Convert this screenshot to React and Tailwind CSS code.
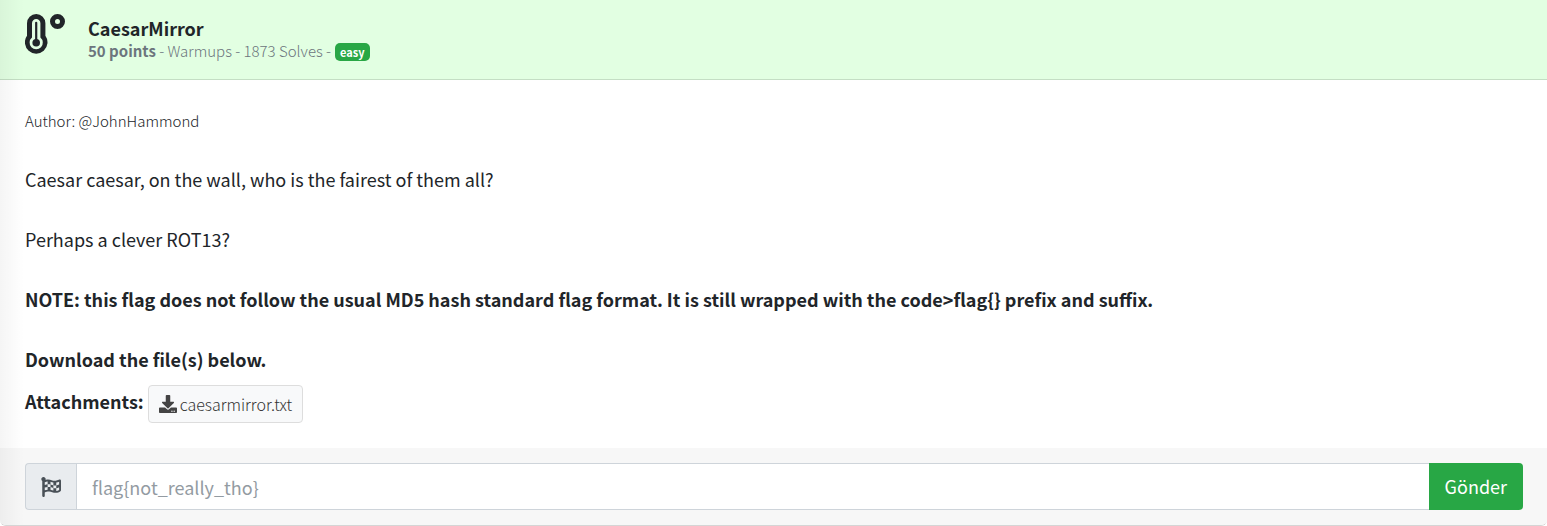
import { FaDownload, FaFlagCheckered } from "react-icons/fa";

function TemperatureIcon() {
  return (
    <svg viewBox="0 0 40 40" className="size-10 shrink-0" fill="none" aria-hidden="true">
      <path
        d="M11.2 0a9.2 9.2 0 0 0-9.2 9.2v12.6a11.3 11.3 0 1 0 18.4 0V9.2A9.2 9.2 0 0 0 11.2 0z"
        fill="#212529"
      />
      <path d="M11.2 5a4.2 4.2 0 0 0-4.2 4.2v14.4a6.6 6.6 0 1 0 8.4 0V9.2A4.2 4.2 0 0 0 11.2 5z" fill="#e2ffe2" />
      <path d="M11.2 8.8v18" stroke="#212529" strokeWidth="2.2" strokeLinecap="round" />
      <circle cx="11.2" cy="28.8" r="3.8" fill="#212529" />
      <circle cx="32.5" cy="7.5" r="5" stroke="#212529" strokeWidth="5" />
    </svg>
  );
}

function Header() {
  return (
    <header className="flex items-start gap-[23px] border-b border-[#c4dec4] bg-[#e2ffe2] pt-3.5 pr-6 pb-[15px] pl-[25px]">
      <TemperatureIcon />
      <div className="pt-1">
        <h1 className="text-[18px] leading-5 font-bold">CaesarMirror</h1>
        <p className="flex items-center gap-1 text-[15px] leading-[26px] font-light text-[#6c757d]">
          <span>
            <b className="font-bold">50 points</b> - Warmups - 1873 Solves -
          </span>
          <span className="mt-0.5 rounded-[5px] bg-[#28a745] px-[5px] text-[11px] leading-[18px] font-bold text-white">
            easy
          </span>
        </p>
      </div>
    </header>
  );
}

function Description() {
  return (
    <main className="pt-[26px] pr-6 pb-[25px] pl-[25px] text-[18px] leading-[30px]">
      <p className="mb-7 text-[15px] font-light">Author: @JohnHammond</p>
      <p className="mb-[30px]">Caesar caesar, on the wall, who is the fairest of them all?</p>
      <p className="mb-[30px]">Perhaps a clever ROT13?</p>
      <p className="mb-[30px] font-bold">
        NOTE: this flag does not follow the usual MD5 hash standard flag format. It is still wrapped with the
        code&gt;flag{"{}"} prefix and suffix.
      </p>
      <p className="mb-[11px] font-bold">Download the file(s) below.</p>
      <div className="flex items-start gap-1">
        <b className="leading-8 font-bold">Attachments:</b>
        <a
          href="#caesarmirror.txt"
          className="flex h-[38px] items-center gap-[3px] rounded border border-[#ddd] bg-[#f8f9fa] px-2.5 text-[16px] font-light text-[#333]"
        >
          <FaDownload className="size-[18px] text-[#444]" aria-hidden="true" />
          caesarmirror.txt
        </a>
      </div>
    </main>
  );
}

function FlagForm() {
  return (
    <form
      className="flex bg-[#f7f7f7] py-[15px] pr-6 pl-[25px] text-[18px]"
      onSubmit={(event) => event.preventDefault()}
    >
      <label
        htmlFor="flag"
        aria-label="Flag"
        className="flex w-[51px] items-center justify-center rounded-l border border-r-0 border-[#ced4da] bg-[#e9ecef] text-[#495057]"
      >
        <FaFlagCheckered className="size-5" aria-hidden="true" />
      </label>
      <input
        id="flag"
        type="text"
        aria-label="Flag"
        placeholder="flag{not_really_tho}"
        className="h-[47px] min-w-0 flex-1 border border-r-0 border-[#ced4da] bg-white px-[15px] outline-none placeholder:text-[#939ba2]"
      />
      <button type="submit" className="rounded-r bg-[#28a745] px-4 text-white">
        Gönder
      </button>
    </form>
  );
}

export default function App() {
  return (
    <div className="relative overflow-hidden rounded-b-md border-b border-[#d5d5d5] bg-white font-['Noto_Sans_CJK_SC','Noto_Sans',sans-serif] text-[#212529]">
      <Header />
      <Description />
      <FlagForm />
      <div className="pointer-events-none absolute inset-y-0 left-0 w-6 bg-linear-to-r from-black/4 to-transparent" />
    </div>
  );
}
